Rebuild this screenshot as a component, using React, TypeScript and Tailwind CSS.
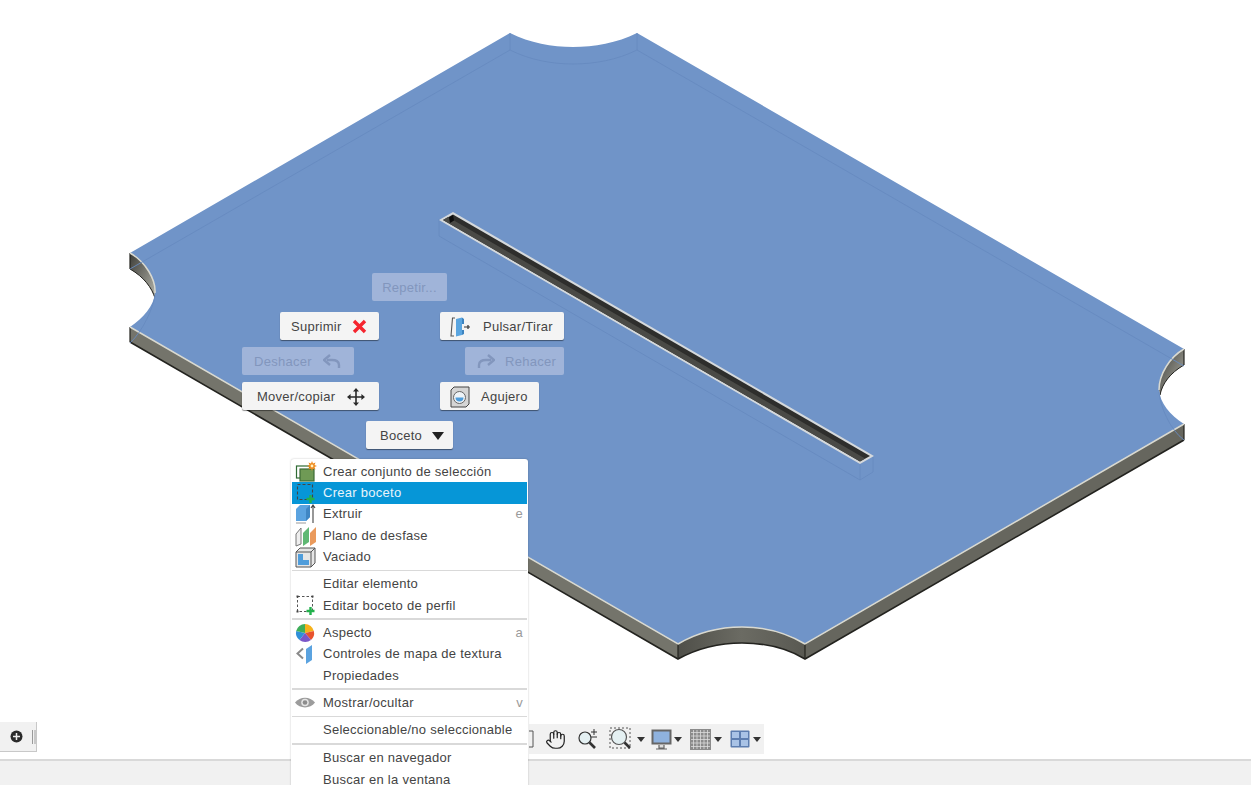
import React from 'react';
import { Hand } from 'lucide-react';

const FONT = "font-['Liberation_Sans',Arial,sans-serif]";

const TOP_NOTCH = 'C530,43 552,47 573,47 C594,47 617,43 637,33';
const RIGHT_NOTCH = 'C1170,357 1159,374 1159,390 C1160,403 1170,415 1184,424';
const BOTTOM_NOTCH = 'C785,632 762,627 742,627 C722,627 700,631 678,644';
const LEFT_NOTCH = 'C143,318 154,306 155,293 C156,280 146,262 130,253';
const OUTLINE = `M510,33 ${TOP_NOTCH} L1184,349 ${RIGHT_NOTCH} L805,644 ${BOTTOM_NOTCH} L130,327 ${LEFT_NOTCH} Z`;

function Model() {
  return (
    <svg width="1251" height="760" viewBox="0 0 1251 760" className="block">
      <defs>
        <linearGradient id="wall" x1="0" x2="1" y1="0" y2="0">
          <stop offset="0" stopColor="#4f4f49" />
          <stop offset="0.5" stopColor="#6b6b63" />
          <stop offset="1" stopColor="#595952" />
        </linearGradient>
        <linearGradient id="notchWall" x1="0" x2="1" y1="0" y2="1">
          <stop offset="0" stopColor="#3d3d38" />
          <stop offset="1" stopColor="#b5b5ab" />
        </linearGradient>
      </defs>
      {/* side walls */}
      <path d="M130,327 L678,644 L678,659 L130,342 Z" fill="#74746b" />
      <path d="M805,644 L1184,424 L1184,440 L805,659 Z" fill="#66665e" />
      <path d="M678,644 C700,631 722,627 742,627 C762,627 785,632 805,644 L805,659 C785,647 762,643 742,643 C722,643 700,647 678,659 Z" fill="url(#wall)" />
      <path d="M130,253 C146,262 156,280 155,293 L155,300 C152,288 144,277 130,269 Z" fill="url(#notchWall)" />
      <path d="M1184,349 C1170,357 1159,374 1159,390 L1160,396 C1162,384 1170,373 1184,365 Z" fill="url(#notchWall)" />
      {/* dark lower edges */}
      <g fill="none" stroke="#23231f" strokeWidth="1.6">
        <path d="M130,342 L678,659 C700,647 722,643 742,643 C762,643 785,647 805,659 L1184,440" />
        <path d="M130,269 C144,277 152,288 155,298" strokeWidth="1" />
        <path d="M1184,365 C1170,373 1162,384 1160,395" strokeWidth="1" />
        <path d="M130,327 V342 M678,644 V659 M805,644 V659 M1184,424 V440 M130,253 V269 M1184,349 V365" strokeWidth="1.2" />
      </g>
      {/* top face */}
      <path d={OUTLINE} fill="#7094c8" />
      <g fill="none" stroke="#d9d9d0" strokeWidth="1.5">
        <path d="M130,327 L678,644 C700,631 722,627 742,627 C762,627 785,632 805,644 L1184,424" />
        <path d="M130,253 C146,262 156,280 155,293" />
        <path d="M1184,349 C1170,357 1159,374 1159,390" />
      </g>
      {/* hidden edges seen through the face */}
      <g fill="none" stroke="#668ac0" strokeWidth="0.9">
        <path d="M510,50 C530,60 552,64 573,64 C594,64 617,60 637,50 L1184,366" />
        <path d="M510,33 V50 M637,33 V50" />
        <path d="M130,269 L510,50" />
        <path d="M155,296 C153,308 143,331 130,343" />
        <path d="M1159,392 C1160,406 1170,430 1184,440" />
        <path d="M439,219 V236 L860,480 L873,472 V456 M860,463 V480" />
      </g>
      {/* slot */}
      <path d="M453,212 L874,456 L860,464 L439,220 Z" fill="#d5d9dc" />
      <path d="M453,214.500 L870,456 L860,461.500 L443,220 Z" fill="#2e2e2c" />
      <path d="M448,217 L865,458.500 L860,461.500 L443,220 Z" fill="#4a4a46" />
      <path d="M453,215 L449,217.500 L450,223 L454,220.500 Z" fill="#0c0c0c" />
    </svg>
  );
}

function FloatButton({ className, disabled, children }: { className: string; disabled?: boolean; children: React.ReactNode }) {
  return (
    <div
      className={`absolute h-7 pt-px flex items-center rounded-[2px] text-[13px] tracking-[0.27px] ${
        disabled
          ? 'bg-[#a0b4d9] text-[#8296bd]'
          : 'bg-[#f4f4f4] text-[#444] shadow-[0_1px_1px_rgba(0,0,0,0.45)]'
      } ${className}`}
    >
      {children}
    </div>
  );
}

const Triangle = ({ className = 'border-t-[#222]' }: { className?: string }) => (
  <span className={`block w-0 h-0 border-x-[4px] border-x-transparent border-t-[5px] ${className}`} />
);

function PushPullIcon() {
  return (
    <svg width="21" height="22" viewBox="0 0 21 22">
      <path d="M5,2 H2.5 L1,20 H4" fill="none" stroke="#555" strokeWidth="1.1" />
      <path d="M6,3 L12,1.5 V19 L6,20.5 Z" fill="#5aa5e0" />
      <path d="M12,1.5 L14,3 V8 H12 M12,14 H14 V18 L12,19" fill="#3d84c0" />
      <path d="M14,11 H20 M18,9 V13" stroke="#333" strokeWidth="1.2" fill="none" />
    </svg>
  );
}

function HoleIcon() {
  return (
    <svg width="20" height="22" viewBox="0 0 20 22">
      <path d="M1,4 L4,1 H19 V18 L16,21 H1 Z" fill="#d5d5d5" stroke="#444" strokeWidth="1" />
      <circle cx="9.500" cy="11.500" r="6" fill="#eef3f7" stroke="#666" strokeWidth="1" />
      <path d="M5.500,11.500 A4,4 0 0 0 13.500,11.500 Z" fill="#4f9ddb" />
    </svg>
  );
}

function MoveIcon() {
  return (
    <svg width="18" height="18" viewBox="0 0 18 18" fill="#2a2a2a">
      <path d="M8.2,3 H9.8 V15 H8.2 Z M3,8.2 H15 V9.8 H3 Z" />
      <path d="M9,0 L12,3.6 H6 Z M9,18 L6,14.4 H12 Z M0,9 L3.6,6 V12 Z M18,9 L14.4,12 V6 Z" />
    </svg>
  );
}

function ArrowIcon({ flip }: { flip?: boolean }) {
  return (
    <svg width="18" height="16" viewBox="0 0 18 16" className={flip ? '-scale-x-100' : ''}>
      <path d="M2,14 V11 C2,7 5,6 9,6 H14" fill="none" stroke="#8296bd" strokeWidth="2.4" />
      <path d="M11,1 L17,6 L11,11" fill="none" stroke="#8296bd" strokeWidth="2.4" />
    </svg>
  );
}

const GreenPlus = () => (
  <path d="M15.5,13 V21 M11.5,17 H19.5" stroke="#22b14c" strokeWidth="2.4" fill="none" />
);

function MenuIcon({ name }: { name: string }) {
  return (
    <svg width="22" height="22" viewBox="0 0 22 22">
      {name === 'set' && (
        <>
          <rect x="1.500" y="5" width="13" height="12" fill="none" stroke="#2f6b33" strokeWidth="1.200" />
          <rect x="5" y="8" width="14" height="12" fill="#6f9a55" stroke="#3d6b35" strokeWidth="1.200" />
          <path d="M17,0 L18,2.500 L20.500,1.500 L19.500,4 L22,5 L19.500,6 L20.500,8.500 L18,7.500 L17,10 L16,7.500 L13.500,8.500 L14.500,6 L12,5 L14.500,4 L13.500,1.500 L16,2.500 Z" fill="#f08a1d" />
          <circle cx="17" cy="5" r="1.400" fill="#fff3c4" />
        </>
      )}
      {name === 'sketch' && (
        <>
          <rect x="2.500" y="2.500" width="15" height="15" fill="none" stroke="#444" strokeWidth="1.100" strokeDasharray="3 2" />
          <GreenPlus />
        </>
      )}
      {name === 'sketch2' && (
        <>
          <rect x="2.500" y="2.500" width="15" height="15" fill="none" stroke="#555" strokeWidth="1" strokeDasharray="2.500 2" />
          <path d="M1.500,1.500 h2 v2 h-2 Z M16.500,1.500 h2 v2 h-2 Z M1.500,16.500 h2 v2 h-2 Z" fill="#444" />
          <GreenPlus />
        </>
      )}
      {name === 'extrude' && (
        <>
          <path d="M1,6 L5,2 H15 V14 L11,18 H1 Z" fill="#5ba3e0" />
          <path d="M11,6 L15,2 V14 L11,18 Z" fill="#3f86c4" />
          <path d="M1,20 H11" stroke="#bbb" strokeWidth="1.500" />
          <path d="M18,20 V3 M16,5 L18,2 L20,5" stroke="#444" strokeWidth="1.100" fill="none" />
        </>
      )}
      {name === 'plane' && (
        <>
          <path d="M1,9 L6,3 V19 L1,21 Z" fill="#eee" stroke="#777" strokeWidth="1" />
          <path d="M8,8 L14,2 V17 L8,21 Z" fill="#5fb874" />
          <path d="M15,8 L21,2 V17 L15,21 Z" fill="#ea9a5c" />
        </>
      )}
      {name === 'shell' && (
        <>
          <path d="M1,6 L5,2 H20 V17 L16,21 H1 Z" fill="#e6e6e6" stroke="#555" strokeWidth="1" />
          <path d="M1,6 H16 V21 M16,6 L20,2" stroke="#555" strokeWidth="1" fill="none" />
          <path d="M3,8 H8 V14 H14 V19 H3 Z" fill="#4f9ddb" />
        </>
      )}
      {name === 'appearance' && (
        <>
          <path d="M10,11 L10,2 A9,9 0 0 1 18.800,9 Z" fill="#f6b21b" />
          <path d="M10,11 L18.800,9 A9,9 0 0 1 16,18 Z" fill="#e8532e" />
          <path d="M10,11 L16,18 A9,9 0 0 1 4.500,18 Z" fill="#7a56c8" />
          <path d="M10,11 L4.500,18 A9,9 0 0 1 1.200,9 Z" fill="#2f8fd8" />
          <path d="M10,11 L1.200,9 A9,9 0 0 1 10,2 Z" fill="#3fae5a" />
        </>
      )}
      {name === 'texture' && (
        <>
          <path d="M8,5.500 L2.500,10.500 L8,15.500" fill="none" stroke="#8a8a8a" strokeWidth="2" />
          <path d="M11,6 L17,2 V17 L11,21 Z" fill="#5ba3e0" />
        </>
      )}
      {name === 'eye' && (
        <>
          <path d="M0,10.500 C5,4 15,4 20,10.500 C15,17 5,17 0,10.500 Z" fill="#9c9c9c" />
          <circle cx="10" cy="10.500" r="3.800" fill="#e4e4e4" />
          <circle cx="10" cy="10.500" r="2.300" fill="#8c8c8c" />
        </>
      )}
    </svg>
  );
}

function MenuItem({ label, icon, hotkey, active }: { label: string; icon?: string; hotkey?: string; active?: boolean }) {
  return (
    <div className={`h-[21.3px] flex items-center relative ${active ? 'bg-[#0696d7] text-[#e8f4fb]' : 'text-[#444]'}`}>
      <div className="w-[31px] pl-[3px] flex items-center shrink-0">{icon && <MenuIcon name={icon} />}</div>
      <span className="flex-1 whitespace-nowrap">{label}</span>
      {hotkey && <span className="pr-[4px] text-[#9a9a9a]">{hotkey}</span>}
    </div>
  );
}

const MenuSep = ({ className = 'h-[6px]' }: { className?: string }) => (
  <div className={`flex items-center ${className}`}>
    <div className="w-full h-[1.5px] bg-[#d9d9d9]" />
  </div>
);

function ContextMenu() {
  return (
    <div className="absolute left-[291px] top-[459px] w-[237px] pt-[2px] px-[1px] bg-white rounded-[3px] text-[13px] tracking-[0.27px] shadow-[0_0_2px_rgba(0,0,0,0.25)]">
      <MenuItem icon="set" label="Crear conjunto de selección" />
      <MenuItem icon="sketch" label="Crear boceto" active />
      <MenuItem icon="extrude" label="Extruir" hotkey="e" />
      <MenuItem icon="plane" label="Plano de desfase" />
      <MenuItem icon="shell" label="Vaciado" />
      <MenuSep />
      <MenuItem label="Editar elemento" />
      <MenuItem icon="sketch2" label="Editar boceto de perfil" />
      <MenuSep />
      <MenuItem icon="appearance" label="Aspecto" hotkey="a" />
      <MenuItem icon="texture" label="Controles de mapa de textura" />
      <MenuItem label="Propiedades" />
      <MenuSep />
      <MenuItem icon="eye" label="Mostrar/ocultar" hotkey="v" />
      <MenuSep />
      <MenuItem label="Seleccionable/no seleccionable" />
      <MenuSep className="h-[7px]" />
      <MenuItem label="Buscar en navegador" />
      <MenuItem label="Buscar en la ventana" />
    </div>
  );
}

function ViewToolbar() {
  return (
    <div className="absolute left-[529px] top-[724px] w-[235px] h-[30px] bg-[#f1f1f1] flex items-center">
      <svg width="5" height="18" viewBox="0 0 5 18" className="shrink-0">
        <path d="M0,1 H4 V17 H0" fill="none" stroke="#555" strokeWidth="1" />
      </svg>
      <Hand size={21} strokeWidth={1.4} className="ml-[11px] text-[#222]" />
      <svg width="22" height="22" viewBox="0 0 22 22" className="ml-[11px]">
        <circle cx="8" cy="10" r="6" fill="#e4f0f2" stroke="#333" strokeWidth="1.200" />
        <path d="M12.500,14.500 L18,20" stroke="#333" strokeWidth="2.600" />
        <path d="M17,1 V7 M14,4 H20 M14,9 H20" stroke="#333" strokeWidth="1" />
      </svg>
      <svg width="24" height="24" viewBox="0 0 24 24" className="ml-[10px]">
        <rect x="1" y="1" width="20" height="20" fill="none" stroke="#555" strokeWidth="1" strokeDasharray="2 2" />
        <circle cx="10" cy="10" r="7.500" fill="#e4f0f2" stroke="#555" strokeWidth="1.200" />
        <path d="M15.500,15.500 L21,21" stroke="#333" strokeWidth="2.600" />
      </svg>
      <Triangle className="ml-[4px] border-t-[#333]" />
      <svg width="21" height="21" viewBox="0 0 21 21" className="ml-[6px]">
        <rect x="0.500" y="0.500" width="20" height="15" fill="#666" />
        <rect x="2.500" y="2.500" width="16" height="11" fill="#8fb2de" />
        <path d="M8,16 V19 H13 V16 M5,20 H16" stroke="#666" strokeWidth="1.200" fill="#ddd" />
      </svg>
      <Triangle className="ml-[2px] border-t-[#333]" />
      <svg width="21" height="21" viewBox="0 0 21 21" className="ml-[8px]">
        <rect width="21" height="21" fill="#8b8b8b" />
        <path d="M3.500,1 V20 M7,1 V20 M10.500,1 V20 M14,1 V20 M17.500,1 V20 M1,3.500 H20 M1,7 H20 M1,10.500 H20 M1,14 H20 M1,17.500 H20" stroke="#dcdcdc" strokeWidth="0.800" />
      </svg>
      <Triangle className="ml-[3px] border-t-[#333]" />
      <svg width="20" height="18" viewBox="0 0 20 18" className="ml-[8px]">
        <rect x="0.500" y="0.500" width="19" height="17" fill="#5d7eb0" rx="1" />
        <path d="M2,2 H9 V8 H2 Z M11,2 H18 V8 H11 Z M2,10 H9 V16 H2 Z M11,10 H18 V16 H11 Z" fill="#a9c3e6" />
      </svg>
      <Triangle className="ml-[3px] border-t-[#333]" />
    </div>
  );
}

export default function App() {
  return (
    <div className={`relative w-[1251px] h-[785px] overflow-hidden bg-white flex flex-col ${FONT}`}>
      <div className="h-[759px] shrink-0">
        <Model />
      </div>
      <div className="flex-1 bg-[#f1f1f1] border-t-2 border-[#d9d9d9]" />

      <FloatButton disabled className="left-[372px] top-[273px] w-[75px] justify-center">Repetir...</FloatButton>
      <FloatButton className="left-[280px] top-[312px] w-[99px] pl-[11px] gap-[10px]">
        Suprimir
        <svg width="15" height="15" viewBox="0 0 15 15">
          <path d="M2,2 L13,13 M13,2 L2,13" stroke="#f5252f" strokeWidth="3.400" />
        </svg>
      </FloatButton>
      <FloatButton className="left-[440px] top-[312px] w-[124px] pl-[10px] gap-[12px]">
        <PushPullIcon />
        Pulsar/Tirar
      </FloatButton>
      <FloatButton disabled className="left-[242px] top-[347px] w-[112px] pl-[12px] gap-[11px]">
        Deshacer
        <ArrowIcon flip />
      </FloatButton>
      <FloatButton disabled className="left-[465px] top-[347px] w-[99px] pl-[12px] gap-[10px]">
        <ArrowIcon />
        Rehacer
      </FloatButton>
      <FloatButton className="left-[242px] top-[382px] w-[137px] pl-[15px] gap-[12px]">
        Mover/copiar
        <MoveIcon />
      </FloatButton>
      <FloatButton className="left-[440px] top-[382px] w-[99px] pl-[10px] gap-[11px]">
        <HoleIcon />
        Agujero
      </FloatButton>
      <FloatButton className="left-[366px] top-[421px] w-[87px] pl-[14px] gap-[10px]">
        Boceto
        <span className="block w-0 h-0 border-x-[6px] border-x-transparent border-t-[8px] border-t-[#222]" />
      </FloatButton>

      {/* nav bar on the left */}
      <div className="absolute left-0 top-[722px] w-[37px] h-[30px] bg-[#f1f1f1] border-r border-b border-[#c8c8c8] flex items-center pl-[10px] gap-[9px]">
        <svg width="13" height="13" viewBox="0 0 13 13">
          <circle cx="6.500" cy="6.500" r="6" fill="#2a2a2a" />
          <path d="M6.500,3 V10 M3,6.500 H10" stroke="#eee" strokeWidth="1.500" />
        </svg>
        <div className="flex gap-[1px] h-[14px]">
          <div className="w-[1px] bg-[#9a9a9a]" />
          <div className="w-[2px] bg-[#c8c8c8]" />
        </div>
      </div>

      <ViewToolbar />
      <ContextMenu />
    </div>
  );
}
